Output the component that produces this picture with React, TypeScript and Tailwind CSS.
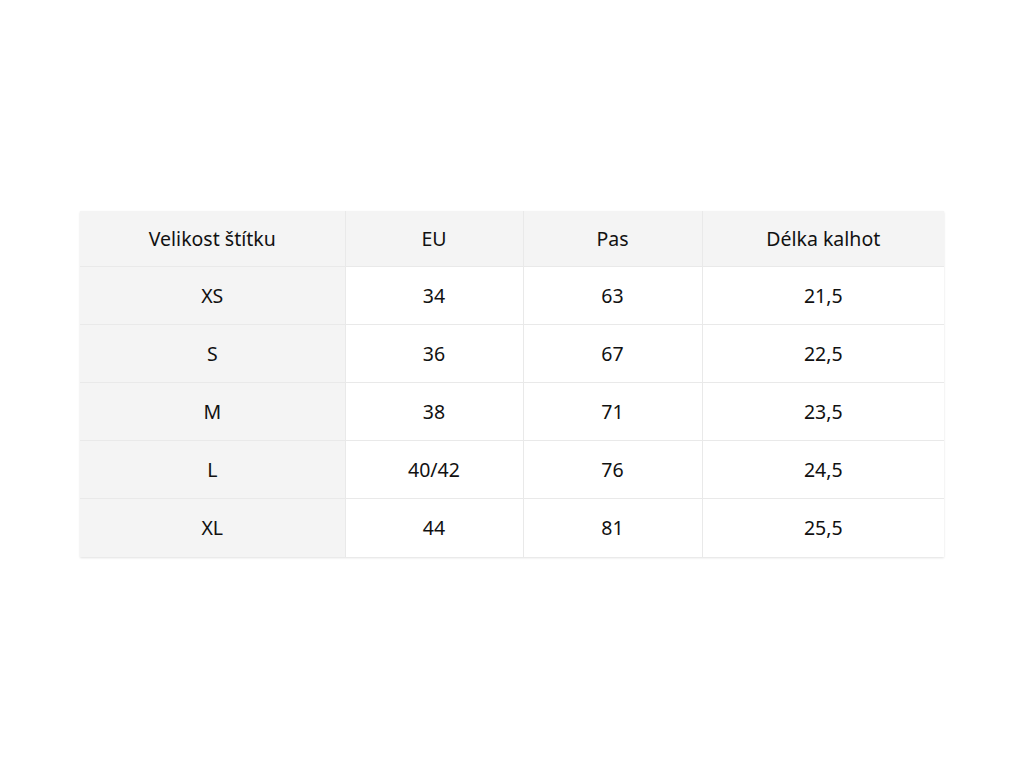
import React from "react";

const rows = [
  ["XS", "34", "63", "21,5"],
  ["S", "36", "67", "22,5"],
  ["M", "38", "71", "23,5"],
  ["L", "40/42", "76", "24,5"],
  ["XL", "44", "81", "25,5"],
];

export default function App() {
  return (
    <div
      className="min-h-screen w-full bg-white flex items-center px-20 pb-[1px]"
      style={{ fontFamily: '"Noto Sans", "Open Sans", sans-serif' }}
    >
      <table className="w-full border-collapse table-fixed text-[19.5px] text-[#111] shadow-[0_1px_2px_rgba(0,0,0,0.12)]">
        <colgroup>
          <col className="w-[265px]" />
          <col className="w-[178px]" />
          <col className="w-[179px]" />
          <col />
        </colgroup>
        <thead>
          <tr className="h-[56px] bg-[#f4f4f4]">
            {["Velikost štítku", "EU", "Pas", "Délka kalhot"].map((h, i) => (
              <th
                key={h}
                className={`font-normal text-center border-b border-[#e9e9e9] ${i > 0 ? "border-l" : ""}`}
              >
                {h}
              </th>
            ))}
          </tr>
        </thead>
        <tbody>
          {rows.map((r, ri) => (
            <tr key={ri} className="h-[58px]">
              {r.map((c, ci) => (
                <td
                  key={ci}
                  className={`text-center border-[#e9e9e9] ${ri < rows.length - 1 ? "border-b" : ""} ${ci > 0 ? "border-l" : ""} ${ci === 0 ? "bg-[#f4f4f4]" : "bg-white"}`}
                >
                  {c}
                </td>
              ))}
            </tr>
          ))}
        </tbody>
      </table>
    </div>
  );
}
